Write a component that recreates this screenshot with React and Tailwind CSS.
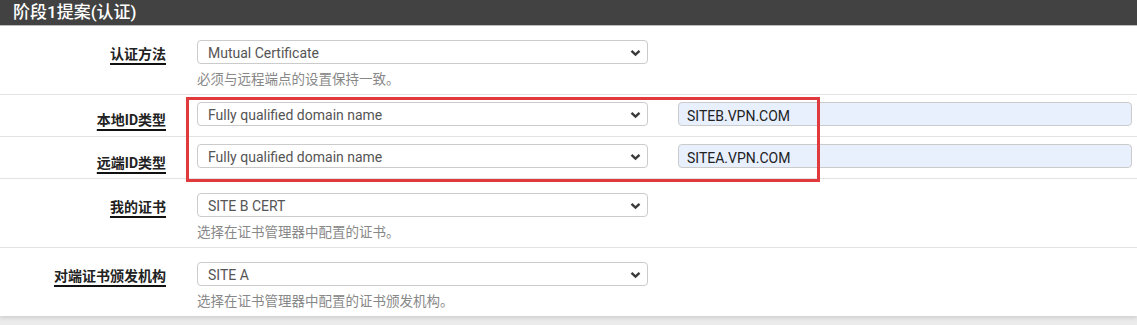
import React from "react";

const cjk = "font-['Roboto','Noto_Sans_CJK_SC',sans-serif]";

function Chevron() {
  return (
    <svg width="11" height="8" viewBox="0 0 11 8" className="absolute right-[6px] top-[8px]">
      <path d="M1.5 1.8 L5.5 5.6 L9.5 1.8" fill="none" stroke="#3a3a3a" strokeWidth="2.4" />
    </svg>
  );
}

function Select({ value }) {
  return (
    <div className="relative w-[451px] h-[24px] border border-[#cbcbcb] rounded-[4px] bg-white">
      <div className={`pl-[10px] leading-[24px] text-[14px] text-[#555] ${cjk}`}>{value}</div>
      <Chevron />
    </div>
  );
}

function Label({ text, pt }) {
  return (
    <div className={`w-[181px] pr-[15px] shrink-0 text-right ${pt}`}>
      <span className={`text-[14px] font-bold leading-[20px] text-[#222] underline underline-offset-[4px] decoration-[1.5px] decoration-[#111] ${cjk}`}>
        {text}
      </span>
    </div>
  );
}

function Help({ text }) {
  return (
    <div className={`mt-[5px] leading-[20px] text-[13.5px] text-[#888] ${cjk}`}>{text}</div>
  );
}

export default function App() {
  return (
    <div className="w-[1137px] h-[325px] bg-[#ebebeb] overflow-hidden">
      <div className="relative bg-white shadow-[0_2px_4px_rgba(0,0,0,0.12)]">
        <div className="h-[26px] bg-[#424242] border-b border-[#bdbdbd] pl-[13px]">
          <span className={`text-[17px] font-medium leading-[25px] text-white ${cjk}`}>阶段1提案(认证)</span>
        </div>

        <div className="flex border-b border-[#e3e3e3] h-[69px]">
          <Label text="认证方法" pt="pt-[15px]" />
          <div className="pl-[16px] pt-[14px]">
            <Select value="Mutual Certificate" />
            <Help text="必须与远程端点的设置保持一致。" />
          </div>
        </div>

        <div className="flex border-b border-[#e3e3e3] h-[42px]">
          <Label text="本地ID类型" pt="pt-[12px]" />
          <div className="pl-[16px] pt-[7px]">
            <Select value="Fully qualified domain name" />
          </div>
          <div className="pl-[30px] pt-[7px]">
            <div className="w-[454px] h-[24px] border border-[#cbcbcb] rounded-[4px] bg-[#e8f0fe] pl-[8px]">
              <span className={`text-[14px] leading-[22px] text-[#222] ${cjk}`}>SITEB.VPN.COM</span>
            </div>
          </div>
        </div>

        <div className="flex border-b border-[#e3e3e3] h-[42px]">
          <Label text="远端ID类型" pt="pt-[13px]" />
          <div className="pl-[16px] pt-[7px]">
            <Select value="Fully qualified domain name" />
          </div>
          <div className="pl-[30px] pt-[7px]">
            <div className="w-[454px] h-[24px] border border-[#cbcbcb] rounded-[4px] bg-[#e8f0fe] pl-[8px]">
              <span className={`text-[14px] leading-[22px] text-[#222] ${cjk}`}>SITEA.VPN.COM</span>
            </div>
          </div>
        </div>

        <div className="flex border-b border-[#e3e3e3] h-[69px]">
          <Label text="我的证书" pt="pt-[15px]" />
          <div className="pl-[16px] pt-[14px]">
            <Select value="SITE B CERT" />
            <Help text="选择在证书管理器中配置的证书。" />
          </div>
        </div>

        <div className="flex h-[68px]">
          <Label text="对端证书颁发机构" pt="pt-[15px]" />
          <div className="pl-[16px] pt-[14px]">
            <Select value="SITE A" />
            <Help text="选择在证书管理器中配置的证书颁发机构。" />
          </div>
        </div>

        <div className="absolute left-[186px] top-[97px] w-[634px] h-[85px] border-[3px] border-[#e0393e] pointer-events-none" />
      </div>
    </div>
  );
}
